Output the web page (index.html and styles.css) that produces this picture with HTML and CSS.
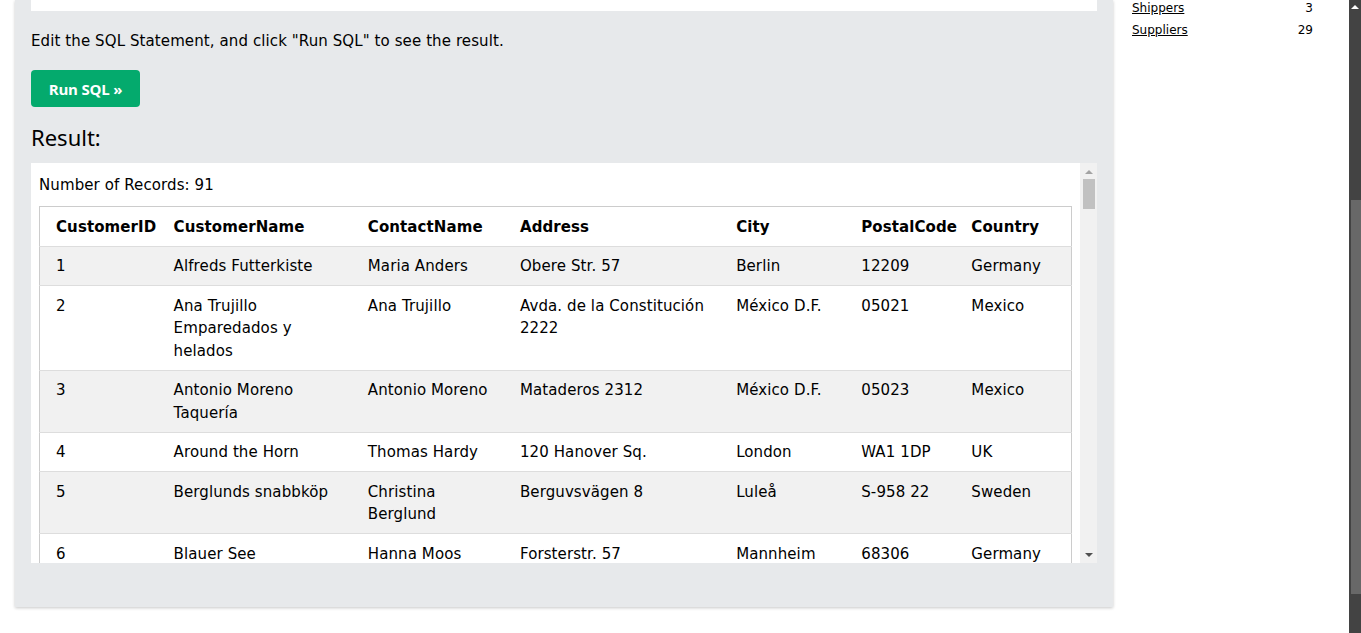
FILE: index.html
```html
<!DOCTYPE html>
<html>
<head>
<meta charset="utf-8">
<link rel="stylesheet" href="styles.css">
</head>
<body>
<div class="page">
  <main class="panel">
    <div class="editor"></div>
    <p class="hint">Edit the SQL Statement, and click "Run SQL" to see the result.</p>
    <button class="run">Run SQL »</button>
    <h2 class="result-title">Result:</h2>
    <div class="frame">
      <div class="frame-body">
        <div class="records">Number of Records: 91</div>
        <table class="data">
          <colgroup>
            <col class="c1"><col class="c2"><col class="c3"><col class="c4"><col class="c5"><col class="c6"><col class="c7">
          </colgroup>
          <tr><th>CustomerID</th><th>CustomerName</th><th>ContactName</th><th>Address</th><th>City</th><th>PostalCode</th><th>Country</th></tr>
          <tr><td>1</td><td>Alfreds Futterkiste</td><td>Maria Anders</td><td>Obere Str. 57</td><td>Berlin</td><td>12209</td><td>Germany</td></tr>
          <tr><td>2</td><td>Ana Trujillo Emparedados y helados</td><td>Ana Trujillo</td><td>Avda. de la Constitución 2222</td><td>México D.F.</td><td>05021</td><td>Mexico</td></tr>
          <tr><td>3</td><td>Antonio Moreno Taquería</td><td>Antonio Moreno</td><td>Mataderos 2312</td><td>México D.F.</td><td>05023</td><td>Mexico</td></tr>
          <tr><td>4</td><td>Around the Horn</td><td>Thomas Hardy</td><td>120 Hanover Sq.</td><td>London</td><td>WA1 1DP</td><td>UK</td></tr>
          <tr><td>5</td><td>Berglunds snabbköp</td><td>Christina Berglund</td><td>Berguvsvägen 8</td><td>Luleå</td><td>S-958 22</td><td>Sweden</td></tr>
          <tr><td>6</td><td>Blauer See Delikatessen</td><td>Hanna Moos</td><td>Forsterstr. 57</td><td>Mannheim</td><td>68306</td><td>Germany</td></tr>
        </table>
      </div>
      <div class="vscroll">
        <span class="arrow up"></span>
        <div class="track"><div class="thumb"></div></div>
        <span class="arrow down"></span>
      </div>
    </div>
  </main>
  <aside class="side">
    <div class="side-row"><a href="#">Shippers</a><span>3</span></div>
    <div class="side-row"><a href="#">Suppliers</a><span>29</span></div>
  </aside>
</div>
<div class="pagebar">
  <span class="pb-arrow"></span>
  <div class="pb-thumb"></div>
</div>
</body>
</html>
```

FILE: styles.css
```css
html, body {
  margin: 0;
  padding: 0;
  background: #fff;
  height: 633px;
  overflow: hidden;
}
body {
  font-family: "DejaVu Sans", Verdana, sans-serif;
  font-size: 15px;
  letter-spacing: 0.1px;
  color: #000;
}
.page {
  display: flex;
  align-items: flex-start;
}
.panel {
  margin-left: 15px;
  width: 1066px;
  padding: 0 16px 44px;
  background: #e7e9eb;
  box-shadow: 0 1px 3px rgba(0,0,0,0.22);
}
.editor {
  height: 11px;
  background: #fff;
}
.hint {
  margin: 19px 0 0;
  line-height: 22px;
  font-size: 15px;
}
.run {
  display: block;
  margin-top: 18px;
  width: 109px;
  height: 37px;
  border: none;
  border-radius: 4px;
  background: #04aa6d;
  color: #fff;
  font-family: "Open Sans", sans-serif;
  font-weight: 700;
  font-size: 15px;
  letter-spacing: -0.2px;
  padding: 0;
}
.result-title {
  margin: 14px 0 0;
  font-family: "Noto Sans", sans-serif;
  font-weight: 400;
  font-size: 22px;
  line-height: 32px;
  letter-spacing: 0;
}
.frame {
  margin-top: 10px;
  height: 400px;
  background: #fff;
  display: flex;
  overflow: hidden;
}
.frame-body {
  flex: 1;
  padding: 11px 8px 0;
  overflow: hidden;
}
.records {
  line-height: 22px;
}
.data {
  margin-top: 10px;
  width: 1033px;
  table-layout: fixed;
  border-collapse: collapse;
  border: 1px solid #ccc;
}
.c1 { width: 126px; }
.c2 { width: 194px; }
.c3 { width: 152px; }
.c4 { width: 216px; }
.c5 { width: 125px; }
.c6 { width: 110px; }
.c7 { width: 108px; }
.data th, .data td {
  text-align: left;
  vertical-align: top;
  padding: 8px;
  line-height: 1.5;
  border-bottom: 1px solid #ddd;
}
.data th {
  padding-top: 9px;
  padding-bottom: 7px;
}
.data td {
  padding-top: 8.5px;
  padding-bottom: 7.5px;
}
.data th:first-child, .data td:first-child {
  padding-left: 16px;
}
.data tr:nth-child(even) {
  background: #f1f1f1;
}
.vscroll {
  width: 17px;
  background: #f1f1f1;
  display: flex;
  flex-direction: column;
  align-items: center;
}
.arrow {
  width: 0;
  height: 0;
  border-left: 4px solid transparent;
  border-right: 4px solid transparent;
}
.arrow.up {
  margin-top: 7px;
  border-bottom: 4px solid #a3a3a3;
}
.arrow.down {
  margin-bottom: 6px;
  border-top: 4px solid #505050;
}
.track {
  flex: 1;
  width: 100%;
  display: flex;
  justify-content: center;
}
.thumb {
  margin-top: 5px;
  width: 12px;
  height: 30px;
  background: #c1c1c1;
}
.side {
  width: 181px;
  padding: 0 36px 0 19px;
  margin-top: -3px;
  font-family: "DejaVu Sans", Verdana, sans-serif;
  font-size: 12px;
  letter-spacing: 0;
}
.side-row {
  display: flex;
  justify-content: space-between;
  line-height: 22px;
}
.side-row a {
  color: #000;
  text-decoration: underline;
}
.pagebar {
  position: fixed;
  top: 0;
  right: 0;
  width: 12px;
  height: 633px;
  background: #434343;
}
.pb-arrow {
  position: absolute;
  top: 5px;
  left: 2px;
  width: 0;
  height: 0;
  border-left: 4px solid transparent;
  border-right: 4px solid transparent;
  border-bottom: 4px solid #fff;
}
.pb-thumb {
  position: absolute;
  top: 200px;
  left: 2px;
  width: 10px;
  height: 394px;
  background: #686868;
}
```
